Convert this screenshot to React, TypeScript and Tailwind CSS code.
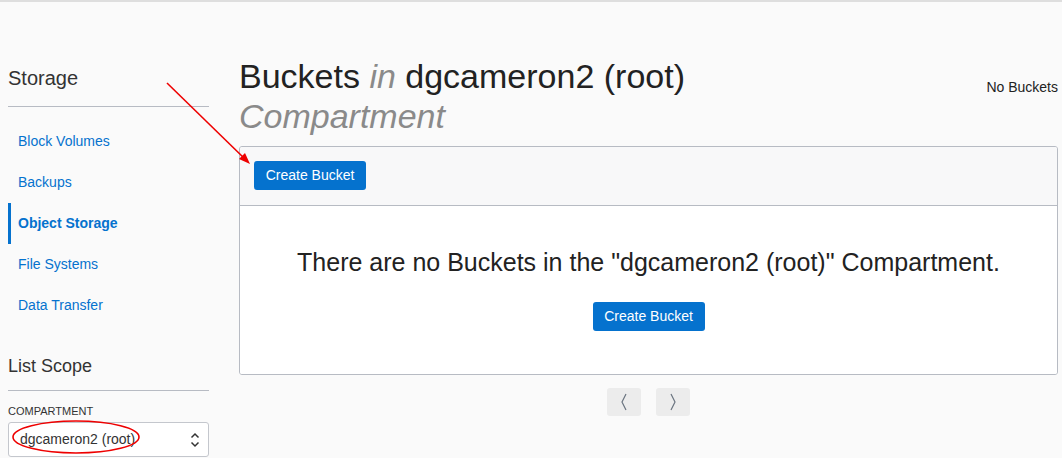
import React from 'react'

const navItems = ['Block Volumes', 'Backups', 'Object Storage', 'File Systems', 'Data Transfer']

function Sidebar() {
  return (
    <div className="w-[201px] shrink-0 pt-[64px]">
      <div className="border-b border-[#b7bbc3] pb-[16px] text-[20px] leading-[24px] text-[#333]">Storage</div>
      <ul className="mt-[14px]">
        {navItems.map((item) => {
          const active = item === 'Object Storage'
          return (
            <li
              key={item}
              className={
                active
                  ? 'flex h-[41px] items-center border-l-[3px] border-[#0572ce] pl-[7px] text-[14px] font-bold text-[#0572ce]'
                  : 'flex h-[41px] items-center border-l-[3px] border-transparent pl-[7px] text-[14px] text-[#0572ce]'
              }
            >
              {item}
            </li>
          )
        })}
      </ul>
      <div className="mt-[29px] border-b border-[#b7bbc3] pb-[13px] text-[18px] leading-[22px] text-[#333]">List Scope</div>
      <div className="mt-[14px] text-[11px] leading-[13px] text-[#333]">COMPARTMENT</div>
      <div className="mt-[4px] flex h-[35px] items-center justify-between rounded-[3px] border border-[#c4c7cd] bg-white pl-[11px] pr-[8px] text-[14px] text-[#333]">
        <span>dgcameron2 (root)</span>
        <svg width="10" height="16" viewBox="0 0 10 16" fill="none" stroke="#333" strokeWidth="1.5">
          <polyline points="1.5,5.5 5,2 8.5,5.5" />
          <polyline points="1.5,10.5 5,14 8.5,10.5" />
        </svg>
      </div>
    </div>
  )
}

function BlueButton() {
  return (
    <button className="h-[29px] w-[112px] rounded-[3px] bg-[#0572ce] text-[14px] text-white">Create Bucket</button>
  )
}

function Chevron({ dir }: { dir: 'left' | 'right' }) {
  return (
    <div className="flex h-[28px] w-[34px] items-center justify-center rounded-[3px] bg-[#ececec]">
      <svg width="8" height="18" viewBox="0 0 8 18" fill="none" stroke="#6b7480" strokeWidth="1.2">
        {dir === 'left' ? <polyline points="6,1 2,9 6,17" /> : <polyline points="2,1 6,9 2,17" />}
      </svg>
    </div>
  )
}

function Main() {
  return (
    <div className="ml-[30px] flex-1 pt-[54px]">
      <div className="flex items-start justify-between">
        <h1 className="text-[34px] leading-[40px] text-[#222]">
          Buckets <i className="text-[#8a8a8a]">in</i> dgcameron2 (root)
          <br />
          <i className="text-[#8a8a8a]">Compartment</i>
        </h1>
        <div className="pt-[21px] text-[14px] text-[#222]">No Buckets</div>
      </div>
      <div className="mt-[10px] overflow-hidden rounded-[3px] border border-[#b7bbc3]">
        <div className="border-b border-[#b7bbc3] bg-[#f8f8f9] px-[14px] pt-[14px] pb-[15px]">
          <BlueButton />
        </div>
        <div className="flex flex-col items-center bg-white pt-[40px] pb-[43px]">
          <div className="text-[25px] leading-[32px] text-[#222]">
            There are no Buckets in the "dgcameron2 (root)" Compartment.
          </div>
          <div className="mt-[24px]">
            <BlueButton />
          </div>
        </div>
      </div>
      <div className="mt-[13px] flex justify-center gap-[15px]">
        <Chevron dir="left" />
        <Chevron dir="right" />
      </div>
    </div>
  )
}

export default function App() {
  return (
    <div
      className="relative h-[458px] w-[1062px] overflow-hidden border-t-2 border-[#dedede] bg-[#fafafa]"
      style={{ fontFamily: '"Liberation Sans", Arial, sans-serif' }}
    >
      <div className="flex pl-[8px] pr-[4px]">
        <Sidebar />
        <Main />
      </div>
      <svg className="pointer-events-none absolute left-0 top-[-2px]" width="1062" height="458" viewBox="0 0 1062 458">
        <line x1="167" y1="83" x2="246" y2="160" stroke="#e00" strokeWidth="1.6" />
        <polygon points="250,164 239,159 245,153" fill="#e00" />
        <ellipse cx="76" cy="437" rx="63" ry="16" fill="none" stroke="#e00" strokeWidth="1.6" />
      </svg>
    </div>
  )
}
